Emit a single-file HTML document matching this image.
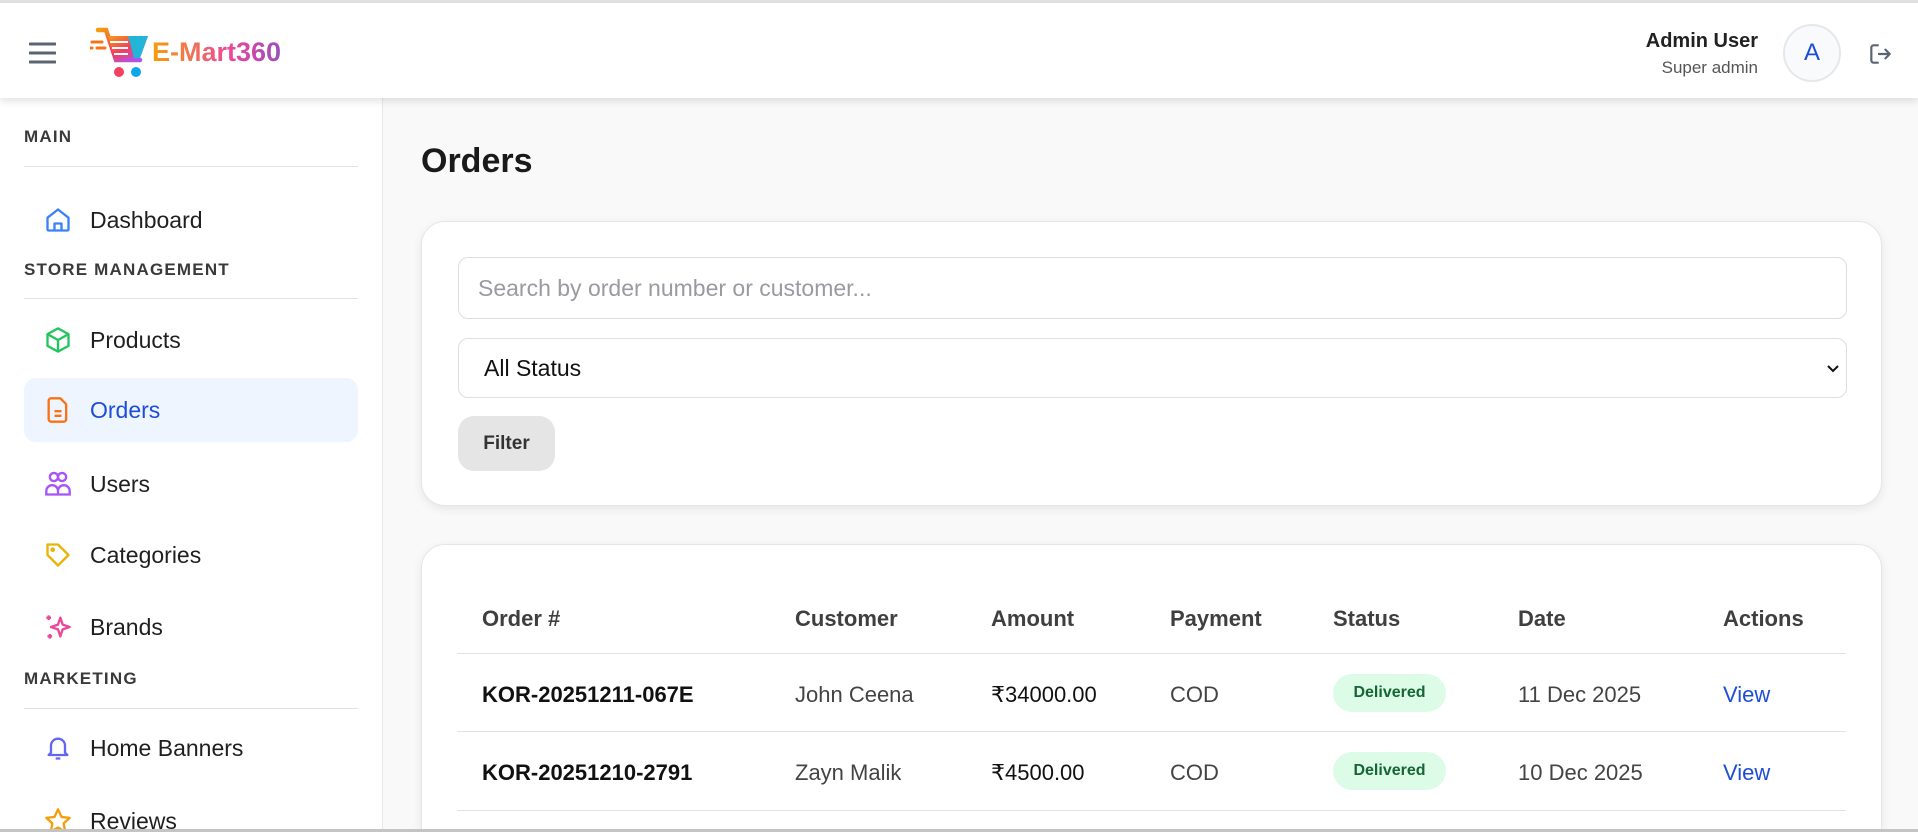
<!DOCTYPE html>
<html style="width:1918px;height:832px;overflow:hidden"><head><meta charset="utf-8"><style>
*{box-sizing:border-box;margin:0;padding:0}
body{width:1918px;height:832px;overflow:hidden;background:#f9f9f9;font-family:"Liberation Sans",sans-serif;color:#1f1f1f;position:relative}
.abs{position:absolute}
.topline{left:0;top:0;width:1918px;height:3px;background:#e3e3e3}
header{position:absolute;left:0;top:3px;width:1918px;height:95px;background:#fff;box-shadow:0 3px 8px rgba(0,0,0,.12);z-index:2}
aside{position:absolute;left:0;top:98px;width:383px;height:734px;background:#fff;border-right:1px solid #e8e8e8}
.lbl{position:absolute;left:24px;font-size:17px;font-weight:bold;letter-spacing:1.2px;color:#3a3a3a}
.hr{position:absolute;left:24px;width:334px;height:1px;background:#e2e2e2}
.item{position:absolute;left:24px;width:334px;height:64px;display:flex;align-items:center;font-size:23px;color:#1f1f1f}
.item svg{position:absolute;left:20px;width:28px;height:28px}
.item span{position:absolute;left:66px}
.act{background:#eef5ff;border-radius:12px}
.act span{color:#1d4ed8}
.card{position:absolute;left:421px;width:1461px;background:#fff;border:1px solid #e6e6e6;border-radius:24px;box-shadow:0 3px 10px rgba(0,0,0,.08)}
.inp{position:absolute;left:36px;width:1389px;border:1px solid #dedede;border-radius:10px;font-size:23px;display:flex;align-items:center;padding-left:19px}
.th{position:absolute;top:606px;font-size:22px;font-weight:bold;color:#3f3f3f}
.c{position:absolute;font-size:22px;color:#444}
.badge{position:absolute;left:1333px;width:113px;height:38px;border-radius:19px;background:#dcfce7;color:#166534;font-size:16px;font-weight:bold;display:flex;align-items:center;justify-content:center}
.rl{position:absolute;left:457px;width:1389px;height:1px;background:#e3e3e3}
</style></head><body>
<div class="abs topline"></div>
<header>
 <svg class="abs" style="left:29px;top:38px" width="27" height="24" viewBox="0 0 27 24"><path d="M1 3H26M1 12H26M1 21H26" stroke="#5b6472" stroke-width="3" stroke-linecap="round"/></svg>
 <svg class="abs" style="left:90px;top:24px" width="60" height="52" viewBox="0 0 60 52">
  <defs><linearGradient id="g" x1="0" y1="0" x2="1" y2="1"><stop offset="0" stop-color="#f59e0b"/><stop offset=".5" stop-color="#f43f5e"/><stop offset="1" stop-color="#a855f7"/></linearGradient></defs>
  <path d="M8 3h8l10 30h24" stroke="url(#g)" stroke-width="4.5" fill="none" stroke-linecap="round"/>
  <path d="M18 9h40l-8 22H24z" fill="url(#g)"/><path d="M38 9h20l-8 22h-6z" fill="#22b5d8"/>
  <path d="M20 15h18M22 21h16M24 27h14" stroke="#fff" stroke-width="2"/>
  <path d="M2 15h10M7 21h8M0 21h2" stroke="#f97316" stroke-width="3" stroke-linecap="round"/>
  <circle cx="29" cy="45" r="5" fill="#f43f5e"/><circle cx="46" cy="45" r="5" fill="#0ea5e9"/>
 </svg>
 <div class="abs" style="left:152px;top:34px;font-size:27px;font-weight:bold;background:linear-gradient(90deg,#f59e0b,#ec4899 60%,#9b4dbd);-webkit-background-clip:text;color:transparent">E-Mart360</div>
 <div class="abs" style="right:160px;top:27px;font-size:20px;font-weight:bold;color:#222;text-align:right">Admin User</div>
 <div class="abs" style="right:160px;top:55px;font-size:17px;color:#555;text-align:right">Super admin</div>
 <div class="abs" style="left:1783px;top:21px;width:58px;height:58px;border-radius:50%;border:2px solid #e5e7eb;background:#f9fafb;color:#1d4ed8;font-size:24px;display:flex;align-items:center;justify-content:center">A</div>
 <svg class="abs" style="left:1867px;top:38px" width="26" height="26" viewBox="0 0 24 24" fill="none" stroke="#5b6472" stroke-width="2" stroke-linecap="round" stroke-linejoin="round"><path d="M10 4H6a2 2 0 0 0-2 2v12a2 2 0 0 0 2 2h4M11 12h10M17 8l4 4-4 4"/></svg>
</header>
<aside>
 <div class="lbl" style="top:29px">MAIN</div><div class="hr" style="top:68px"></div>
 <div class="item" style="top:90px"><svg viewBox="0 0 24 24" fill="none" stroke="#3b82f6" stroke-width="2" stroke-linejoin="round"><path d="M3 10l9-7 9 7v10a1 1 0 0 1-1 1H4a1 1 0 0 1-1-1zM9 21v-6h6v6"/></svg><span>Dashboard</span></div>
 <div class="lbl" style="top:162px">STORE MANAGEMENT</div><div class="hr" style="top:200px"></div>
 <div class="item" style="top:210px"><svg viewBox="0 0 24 24" fill="none" stroke="#22c55e" stroke-width="2" stroke-linejoin="round"><path d="M12 2l9 5v10l-9 5-9-5V7zM3 7l9 5 9-5M12 12v10"/></svg><span>Products</span></div>
 <div class="item act" style="top:280px"><svg viewBox="0 0 24 24" fill="none" stroke="#f97316" stroke-width="2" stroke-linejoin="round"><path d="M6 2h8l5 5v13a2 2 0 0 1-2 2H6a2 2 0 0 1-2-2V4a2 2 0 0 1 2-2zM9 13h6M9 17h6"/></svg><span>Orders</span></div>
 <div class="item" style="top:354px"><svg viewBox="0 0 24 24" fill="none" stroke="#a855f7" stroke-width="2"><circle cx="8.5" cy="6" r="3.5"/><circle cx="15.5" cy="6" r="3.5"/><path d="M2 21v-3a5 5 0 0 1 10 0v3zM12 21v-3a5 5 0 0 1 10 0v3z"/></svg><span>Users</span></div>
 <div class="item" style="top:425px"><svg viewBox="0 0 24 24" fill="none" stroke="#eab308" stroke-width="2" stroke-linejoin="round"><path d="M3 3h9l9 9-9 9-9-9z"/><circle cx="7.5" cy="7.5" r="1"/></svg><span>Categories</span></div>
 <div class="item" style="top:497px"><svg viewBox="0 0 24 24" fill="none" stroke="#ec4899" stroke-width="2" stroke-linejoin="round"><path d="M14 4l2 6 6 2-6 2-2 6-2-6-6-2 6-2zM4 2v4M2 4h4M5 18v4M3 20h4"/></svg><span>Brands</span></div>
 <div class="lbl" style="top:571px">MARKETING</div><div class="hr" style="top:610px"></div>
 <div class="item" style="top:618px"><svg viewBox="0 0 24 24" fill="none" stroke="#6366f1" stroke-width="2" stroke-linejoin="round"><path d="M6 16V10a6 6 0 0 1 12 0v6l2 2H4zM10 21h4"/></svg><span>Home Banners</span></div>
 <div class="item" style="top:691px"><svg viewBox="0 0 24 24" fill="none" stroke="#f59e0b" stroke-width="2" stroke-linejoin="round"><path d="M12 2l3 6.5 7 .8-5.2 4.8 1.4 7L12 17.6 5.8 21l1.4-7L2 9.3l7-.8z"/></svg><span>Reviews</span></div>
</aside>
<div class="abs" style="left:421px;top:142px;font-size:34px;font-weight:bold;color:#1a1a1a">Orders</div>
<div class="card" style="top:221px;height:285px">
 <div class="inp" style="top:35px;height:62px;color:#9a9aa0">Search by order number or customer...</div>
 <div class="inp" style="top:116px;height:60px;color:#111;padding-left:25px">All Status
  <svg class="abs" style="right:6px;top:23px" width="14" height="14" viewBox="0 0 14 14"><path d="M2 4l5 5 5-5" stroke="#111" stroke-width="2" fill="none"/></svg></div>
 <div class="abs" style="left:36px;top:194px;width:97px;height:55px;border-radius:16px;background:#e5e5e5;font-size:19px;font-weight:bold;color:#333;display:flex;align-items:center;justify-content:center">Filter</div>
</div>
<div class="card" style="top:544px;height:286px;border-bottom-left-radius:0;border-bottom-right-radius:0"></div>
<div class="th" style="left:482px">Order #</div>
<div class="th" style="left:795px">Customer</div>
<div class="th" style="left:991px">Amount</div>
<div class="th" style="left:1170px">Payment</div>
<div class="th" style="left:1333px">Status</div>
<div class="th" style="left:1518px">Date</div>
<div class="th" style="left:1723px">Actions</div>
<div class="rl" style="top:653px"></div>
<div class="c" style="left:482px;top:682px;font-weight:bold;color:#111">KOR-20251211-067E</div>
<div class="c" style="left:795px;top:682px">John Ceena</div>
<div class="c" style="left:991px;top:682px;color:#111">₹34000.00</div>
<div class="c" style="left:1170px;top:682px">COD</div>
<div class="badge" style="top:674px">Delivered</div>
<div class="c" style="left:1518px;top:682px">11 Dec 2025</div>
<div class="c" style="left:1723px;top:682px;color:#1d4ed8">View</div>
<div class="rl" style="top:731px"></div>
<div class="c" style="left:482px;top:760px;font-weight:bold;color:#111">KOR-20251210-2791</div>
<div class="c" style="left:795px;top:760px">Zayn Malik</div>
<div class="c" style="left:991px;top:760px;color:#111">₹4500.00</div>
<div class="c" style="left:1170px;top:760px">COD</div>
<div class="badge" style="top:752px">Delivered</div>
<div class="c" style="left:1518px;top:760px">10 Dec 2025</div>
<div class="c" style="left:1723px;top:760px;color:#1d4ed8">View</div>
<div class="rl" style="top:810px"></div>
<div class="abs" style="left:0;top:829px;width:1918px;height:3px;background:#c4c4c4;z-index:5"></div>
</body></html>
